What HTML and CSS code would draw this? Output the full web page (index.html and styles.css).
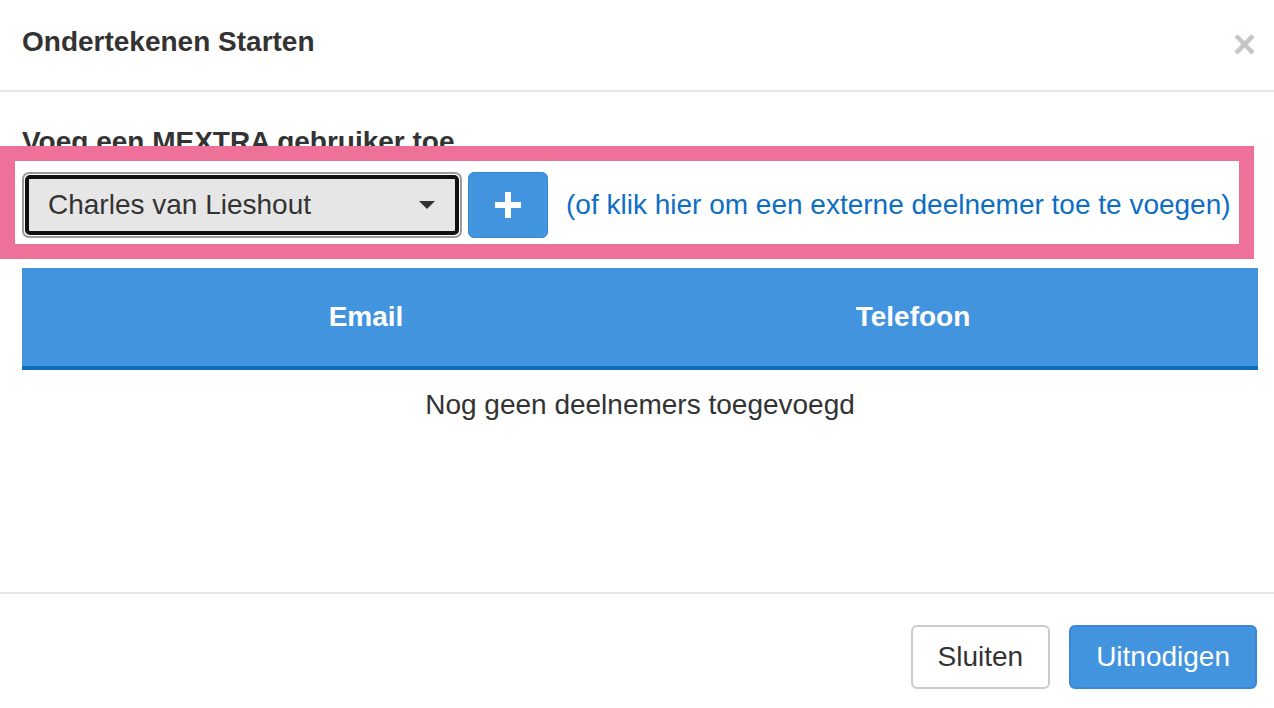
FILE: index.html
```html
<!DOCTYPE html>
<html>
	<head>
		<meta charset="UTF-8">
		<link rel="stylesheet" href="styles.css">
		<title>Ondertekenen Starten</title>
	</head>
	<body>
		<div class="modal">
			<div class="modal-header">
				<h4 class="modal-title">Ondertekenen Starten</h4>
				<button class="btn-close">&times;</button>
			</div>
			<div class="modal-body">
				<p class="field-label">Voeg een MEXTRA gebruiker toe</p>
				<div class="user-row">
					<div class="highlight"></div>
					<div class="select-wrap">
						<div class="select-box">
							<span class="select-text">Charles van Lieshout</span>
							<span class="select-caret"></span>
						</div>
					</div>
					<button class="btn-add">
						<svg width="28" height="28" viewBox="0 0 28 28">
							<rect x="11" y="1" width="6" height="26" fill="#fff"></rect>
							<rect x="1" y="11" width="26" height="6" fill="#fff"></rect>
						</svg>
					</button>
					<a class="link-external">(of klik hier om een externe deelnemer toe te voegen)</a>
				</div>
				<table class="participants">
					<thead>
						<tr>
							<th class="col-email">Email</th>
							<th class="col-phone">Telefoon</th>
							<th class="col-actions"></th>
						</tr>
					</thead>
				</table>
				<p class="empty-text">Nog geen deelnemers toegevoegd</p>
			</div>
			<div class="modal-footer">
				<button class="btn btn-default">Sluiten</button>
				<button class="btn btn-primary">Uitnodigen</button>
			</div>
		</div>
	</body>
</html>
```

FILE: styles.css
```css
body {
	margin: 0;
	font-family: "Liberation Sans", Arial, sans-serif;
	color: #333;
	background: #fff;
}
.modal {
	width: 1274px;
	height: 708px;
	overflow: hidden;
}
.modal-header {
	height: 84px;
	padding: 0 16px 6px 22px;
	border-bottom: 2px solid #e5e5e5;
	display: flex;
	align-items: center;
	justify-content: space-between;
}
.modal-title {
	margin: 0;
	font-size: 28px;
	font-weight: bold;
	color: #333;
}
.btn-close {
	border: 0;
	background: none;
	padding: 0;
	margin-right: 2px;
	margin-top: 4px;
	font-family: "Liberation Sans", Arial, sans-serif;
	font-size: 40px;
	font-weight: bold;
	line-height: 1;
	color: #c6c6c6;
	cursor: pointer;
}
.modal-body {
	padding: 0 16px 0 22px;
	height: 500px;
}
.field-label {
	margin: 0;
	padding-top: 34px;
	font-size: 28px;
	font-weight: bold;
	line-height: 32px;
}
.user-row {
	position: relative;
	margin-top: 14px;
	display: flex;
	align-items: center;
	height: 66px;
}
.highlight {
	position: absolute;
	top: -26px;
	left: -22px;
	right: 4px;
	bottom: -21px;
	border: 15px solid #ee7199;
	pointer-events: none;
}
.select-wrap {
	border: 2px solid #9a9a9a;
	border-radius: 7px;
	padding: 1px;
	box-sizing: border-box;
	width: 440px;
	height: 66px;
}
.select-box {
	height: 100%;
	box-sizing: border-box;
	border: 4px solid #111;
	border-radius: 5px;
	background: #e6e6e6;
	display: flex;
	align-items: center;
	justify-content: space-between;
	padding: 0 20px 0 19px;
}
.select-text {
	font-size: 28px;
	color: #333;
}
.select-caret {
	width: 0;
	height: 0;
	border-left: 8px solid transparent;
	border-right: 8px solid transparent;
	border-top: 8px solid #333;
}
.btn-add {
	margin-left: 6px;
	width: 80px;
	height: 66px;
	border: 1px solid #3a88d4;
	border-radius: 6px;
	background: #4394df;
	display: flex;
	align-items: center;
	justify-content: center;
	padding: 0;
}
.link-external {
	margin-left: 18px;
	font-size: 28px;
	color: #0d6ec4;
	cursor: pointer;
}
.participants {
	margin-top: 30px;
	width: 100%;
	border-collapse: collapse;
	table-layout: fixed;
}
.participants th {
	height: 98px;
	background: #4394df;
	border-bottom: 4px solid #0b6ebd;
	color: #fff;
	font-size: 28px;
	font-weight: bold;
	padding: 0;
}
.col-email {
	width: 688px;
}
.col-phone {
	width: 406px;
}
.empty-text {
	margin: 19px 0 0;
	text-align: center;
	font-size: 28px;
	line-height: 32px;
}
.modal-footer {
	border-top: 2px solid #e5e5e5;
	padding: 31px 17px 0 22px;
	display: flex;
	justify-content: flex-end;
	gap: 19px;
}
.btn {
	height: 64px;
	font-family: "Liberation Sans", Arial, sans-serif;
	font-size: 28px;
	border-radius: 6px;
	padding: 0 25px;
	cursor: pointer;
}
.btn-default {
	background: #fff;
	border: 2px solid #ccc;
	color: #333;
}
.btn-primary {
	background: #4394df;
	border: 2px solid #3a88d4;
	color: #fff;
}
```
